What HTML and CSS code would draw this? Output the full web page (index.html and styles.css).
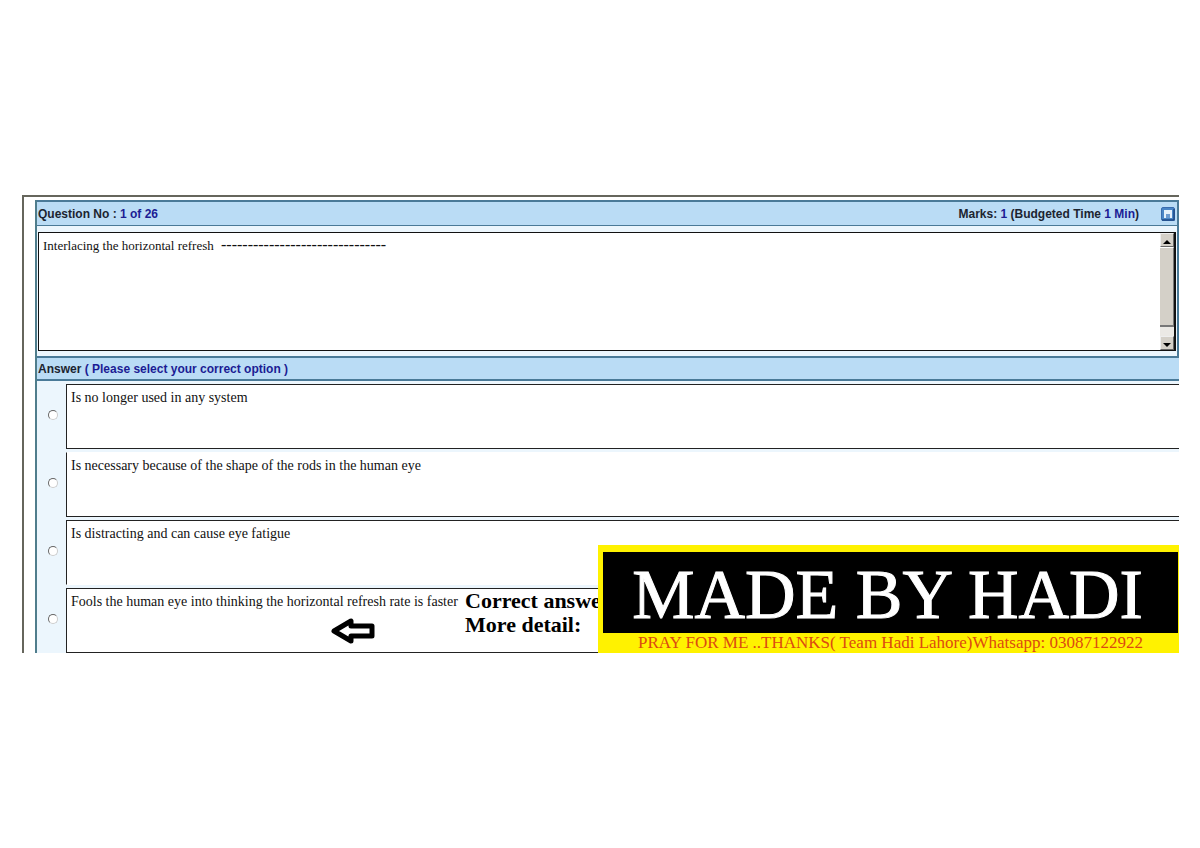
FILE: index.html
```html
<!DOCTYPE html>
<html lang="en">
<head>
    <meta charset="UTF-8">
    <meta name="viewport" content="width=device-width, initial-scale=1.0">
    <title>Question 1 of 26</title>
    <link rel="stylesheet" href="styles.css">
</head>
<body>
    <div class="quiz">
        <form class="panel">
            <div class="question">
                <div class="bar">
                    <span>Question No : <b>1 of 26</b></span>
                    <span class="marks">Marks: <b>1</b> (Budgeted Time <b>1 Min</b>)</span>
                    <button type="button" class="save" aria-label="Save">
                        <svg width="14" height="14" viewBox="0 0 14 14">
                            <rect x="0.5" y="0.5" width="13" height="13" rx="1.5" fill="#4a86c6" stroke="#3a6cae"/>
                            <path d="M1 13 H13 V2" fill="none" stroke="#1f4a86" stroke-width="1.5"/>
                            <path d="M3 3 H11 V11 H9 V7 H5 V11 H3 Z" fill="#e4f0fb"/>
                            <rect x="5" y="7" width="4" height="4" fill="#6d9bd0"/>
                        </svg>
                    </button>
                </div>
                <div class="question-box">
                    <p>Interlacing the horizontal refresh <span class="blank">-------------------------------</span></p>
                    <div class="scrollbar">
                        <button type="button" aria-label="Scroll up"><svg width="8" height="4" viewBox="0 0 8 4"><path d="M0 4 L4 0 L8 4 Z"/></svg></button>
                        <div class="thumb"></div>
                        <div class="track"></div>
                        <button type="button" aria-label="Scroll down"><svg width="8" height="4" viewBox="0 0 8 4"><path d="M0 0 L4 4 L8 0 Z"/></svg></button>
                    </div>
                </div>
            </div>
            <div class="bar answer-bar">
                <span>Answer <b>( Please select your correct option )</b></span>
            </div>
            <div class="options">
                <div class="option">
                    <input type="radio" name="answer" id="a1">
                    <label for="a1">Is no longer used in any system</label>
                </div>
                <div class="option no-top">
                    <input type="radio" name="answer" id="a2">
                    <label for="a2">Is necessary because of the shape of the rods in the human eye</label>
                </div>
                <div class="option no-bottom">
                    <input type="radio" name="answer" id="a3">
                    <label for="a3">Is distracting and can cause eye fatigue</label>
                </div>
                <div class="option">
                    <input type="radio" name="answer" id="a4">
                    <label for="a4">Fools the human eye into thinking the horizontal refresh rate is faster</label>
                </div>
            </div>
        </form>

        <!-- notes on top of the last answer -->
        <svg class="arrow" width="46" height="28" viewBox="0 0 46 28">
            <path d="M4 14 L21 4 V9 H42 V19 H21 V24 Z" fill="#fff" stroke="#000" stroke-width="5" stroke-linejoin="round"/>
        </svg>
        <div class="note">Correct answe<br>More detail:</div>
        <div class="banner">
            <div class="banner-title">MADE BY HADI</div>
            <div class="banner-text">PRAY FOR ME ..THANKS( Team Hadi Lahore)Whatsapp: 03087122922</div>
        </div>
    </div>
</body>
</html>
```
FILE: styles.css
```css
body {
    margin: 0;
    padding: 195px 21px 40px 22px;
    background-color: #fff;
    color: #111;
    font-family: "Liberation Serif", "Times New Roman", serif;
    font-size: 14px;
}

.quiz {
    position: relative;
    overflow: hidden;
    border-top: 2px solid #66665c;
    border-left: 2px solid #66665c;
    padding: 3px 0 0 11px;
}

.panel {
    border-left: 2px solid #4f7d8c;
    background-color: #ecf6fd;
}

.question {
    border: 2px solid #4a7a98;
    border-left: none;
}

.bar {
    display: flex;
    align-items: center;
    height: 23px;
    padding: 0 2px 0 1px;
    background-color: #badcf5;
    border-bottom: 1px solid #4a7a98;
    color: #1c2430;
    font-family: "Liberation Sans", Arial, sans-serif;
    font-size: 12px;
    font-weight: bold;
}

.bar b {
    color: #1c1c94;
}

.answer-bar {
    height: 21px;
    border-bottom-width: 2px;
}

.marks {
    margin-left: auto;
}

.save {
    margin-left: 22px;
    padding: 0;
    border: none;
    background: none;
    line-height: 0;
}

.question-box {
    display: flex;
    justify-content: space-between;
    height: 117px;
    margin: 6px 1px 5px 1px;
    background-color: #fff;
    border: 1px solid #111;
    border-right-width: 2px;
}

.question-box p {
    margin: 4px;
    font-size: 13px;
    line-height: 16px;
}

.blank {
    margin-left: 4px;
    font-size: 16px;
}

.scrollbar {
    display: flex;
    flex-direction: column;
    width: 14px;
    background-color: #d4d0c8;
}

.scrollbar button {
    height: 14px;
    padding: 0;
    background-color: #d4d0c8;
    border: 1px solid #eee;
    border-right-color: #666;
    border-bottom-color: #666;
    line-height: 8px;
}

.thumb {
    flex: 1;
    border-right: 1px solid #777;
    border-bottom: 2px solid #777;
    border-top: 1px solid #fff;
}

.track {
    height: 9px;
    background-color: #ebe9e5;
}

.options {
    display: flex;
    flex-direction: column;
    gap: 3px;
    padding-top: 3px;
}

.option {
    display: flex;
    align-items: center;
}

.option input {
    appearance: none;
    flex: none;
    width: 10px;
    height: 10px;
    margin: 0 8px 3px 11px;
    border: 1px solid #666;
    border-right-color: #ccc;
    border-bottom-color: #ccc;
    border-radius: 50%;
    background-color: #fff;
}

.option label {
    flex: 1;
    box-sizing: border-box;
    height: 65px;
    padding: 5px 4px;
    background-color: #fff;
    border: 1px solid #222;
    border-right: none;
    line-height: 16px;
}

.no-top label {
    border-top-color: #fff;
}

.no-bottom label {
    border-bottom-color: #fff;
}

.arrow {
    position: absolute;
    left: 306px;
    bottom: 8px;
}

.note {
    position: absolute;
    left: 441px;
    bottom: 16px;
    color: #000;
    font-size: 22px;
    font-weight: bold;
    line-height: 24px;
}

.banner {
    position: absolute;
    right: 0;
    bottom: 0;
    width: 575px;
    padding: 7px 1px 0 5px;
    background-color: #fff200;
    text-align: center;
    white-space: nowrap;
}

.banner-title {
    padding: 4px 6px 0 0;
    background-color: #000;
    color: #fff;
    font-size: 70px;
    line-height: 77px;
    -webkit-text-stroke: 1px #fff;
}

.banner-text {
    color: #dc4a10;
    font-size: 17px;
    line-height: 20px;
}
```
